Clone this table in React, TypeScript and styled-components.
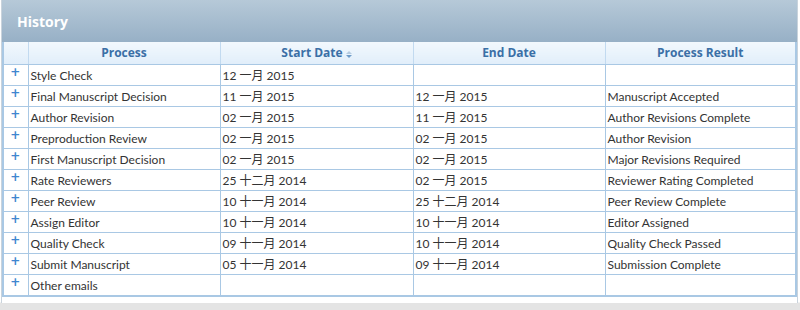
import React from 'react'
import styled, { createGlobalStyle } from 'styled-components'

const GlobalStyle = createGlobalStyle`
  html, body {
    margin: 0;
    padding: 0;
    background: #ffffff;
  }
  body {
    font-family: Lato, "Noto Sans CJK SC", sans-serif;
  }
`

const Page = styled.div`
  width: 800px;
  height: 310px;
  box-sizing: border-box;
  padding: 0 1px;
  background: linear-gradient(to bottom, #ffffff 0, #ffffff 302px, #e4e4e4 303px);
`

const Panel = styled.div`
  width: 797px;
  box-sizing: border-box;
  border-left: 1px solid #c9d3dc;
  border-right: 1px solid #c9d3dc;
  background: #ffffff;
  padding-bottom: 6px;
`

const Header = styled.div`
  height: 42px;
  display: flex;
  align-items: center;
  padding-left: 15px;
  padding-top: 1px;
  box-sizing: border-box;
  background: linear-gradient(to bottom, #b6c9d8 0%, #97b0c6 100%);
  color: #ffffff;
  font-family: "Open Sans", sans-serif;
  font-weight: 700;
  font-size: 14px;
`

const Table = styled.table`
  width: 100%;
  border-collapse: collapse;
  table-layout: fixed;
  border-left: 2px solid #a9c8e4;
  border-right: 2px solid #a9c8e4;
  border-bottom: 2px solid #a9c8e4;
`

const HeadCell = styled.th<{ w?: number }>`
  width: ${({ w }) => (w ? `${w}px` : 'auto')};
  height: 22px;
  box-sizing: border-box;
  padding: 0;
  border-left: 1px solid #c2daf0;
  border-bottom: 1px solid #a9c8e4;
  background: linear-gradient(to bottom, #f2f8fd 0%, #e1eefa 100%);
  color: #3b6fa6;
  font-family: "Open Sans", sans-serif;
  font-weight: 700;
  font-size: 12px;
  text-align: center;
  &:first-child {
    border-left: none;
  }
`

const SortArrows = styled.span`
  display: inline-flex;
  flex-direction: column;
  margin-left: 3px;
  vertical-align: 3px;
  gap: 1px;
`

const Arrow = styled.span<{ up?: boolean }>`
  width: 0;
  height: 0;
  border-left: 3px solid transparent;
  border-right: 3px solid transparent;
  ${({ up }) =>
    up ? 'border-bottom: 3px solid #b5cbe0;' : 'border-top: 3px solid #6f9cc9;'}
`

const Cell = styled.td`
  height: 21px;
  box-sizing: border-box;
  padding: 1px 0 0 2px;
  border-left: 1px solid #a9c8e4;
  border-bottom: 1px solid #a9c8e4;
  color: #333333;
  font-size: 12px;
  line-height: 19px;
  white-space: nowrap;
  overflow: hidden;
  &:first-child {
    border-left: none;
  }
`

const PlusCell = styled(Cell)`
  padding: 0 1px 0 0;
  text-align: center;
  vertical-align: top;
  color: #3f86cf;
  font-family: "DejaVu Sans", sans-serif;
  font-weight: 700;
  font-size: 12px;
  line-height: 15px;
`

type Entry = [string, string, string, string]

const rows: Entry[] = [
  ['Style Check', '12 一月 2015', '', ''],
  ['Final Manuscript Decision', '11 一月 2015', '12 一月 2015', 'Manuscript Accepted'],
  ['Author Revision', '02 一月 2015', '11 一月 2015', 'Author Revisions Complete'],
  ['Preproduction Review', '02 一月 2015', '02 一月 2015', 'Author Revision'],
  ['First Manuscript Decision', '02 一月 2015', '02 一月 2015', 'Major Revisions Required'],
  ['Rate Reviewers', '25 十二月 2014', '02 一月 2015', 'Reviewer Rating Completed'],
  ['Peer Review', '10 十一月 2014', '25 十二月 2014', 'Peer Review Complete'],
  ['Assign Editor', '10 十一月 2014', '10 十一月 2014', 'Editor Assigned'],
  ['Quality Check', '09 十一月 2014', '10 十一月 2014', 'Quality Check Passed'],
  ['Submit Manuscript', '05 十一月 2014', '09 十一月 2014', 'Submission Complete'],
  ['Other emails', '', '', ''],
]

export default function App() {
  return (
    <>
      <GlobalStyle />
      <Page>
        <Panel>
          <Header>History</Header>
          <Table>
            <thead>
              <tr>
                <HeadCell w={25} />
                <HeadCell w={192}>Process</HeadCell>
                <HeadCell w={193}>
                  Start Date
                  <SortArrows>
                    <Arrow up />
                    <Arrow />
                  </SortArrows>
                </HeadCell>
                <HeadCell w={192}>End Date</HeadCell>
                <HeadCell>Process Result</HeadCell>
              </tr>
            </thead>
            <tbody>
              {rows.map((r) => (
                <tr key={r[0]}>
                  <PlusCell>+</PlusCell>
                  <Cell>{r[0]}</Cell>
                  <Cell>{r[1]}</Cell>
                  <Cell>{r[2]}</Cell>
                  <Cell>{r[3]}</Cell>
                </tr>
              ))}
            </tbody>
          </Table>
        </Panel>
      </Page>
    </>
  )
}
